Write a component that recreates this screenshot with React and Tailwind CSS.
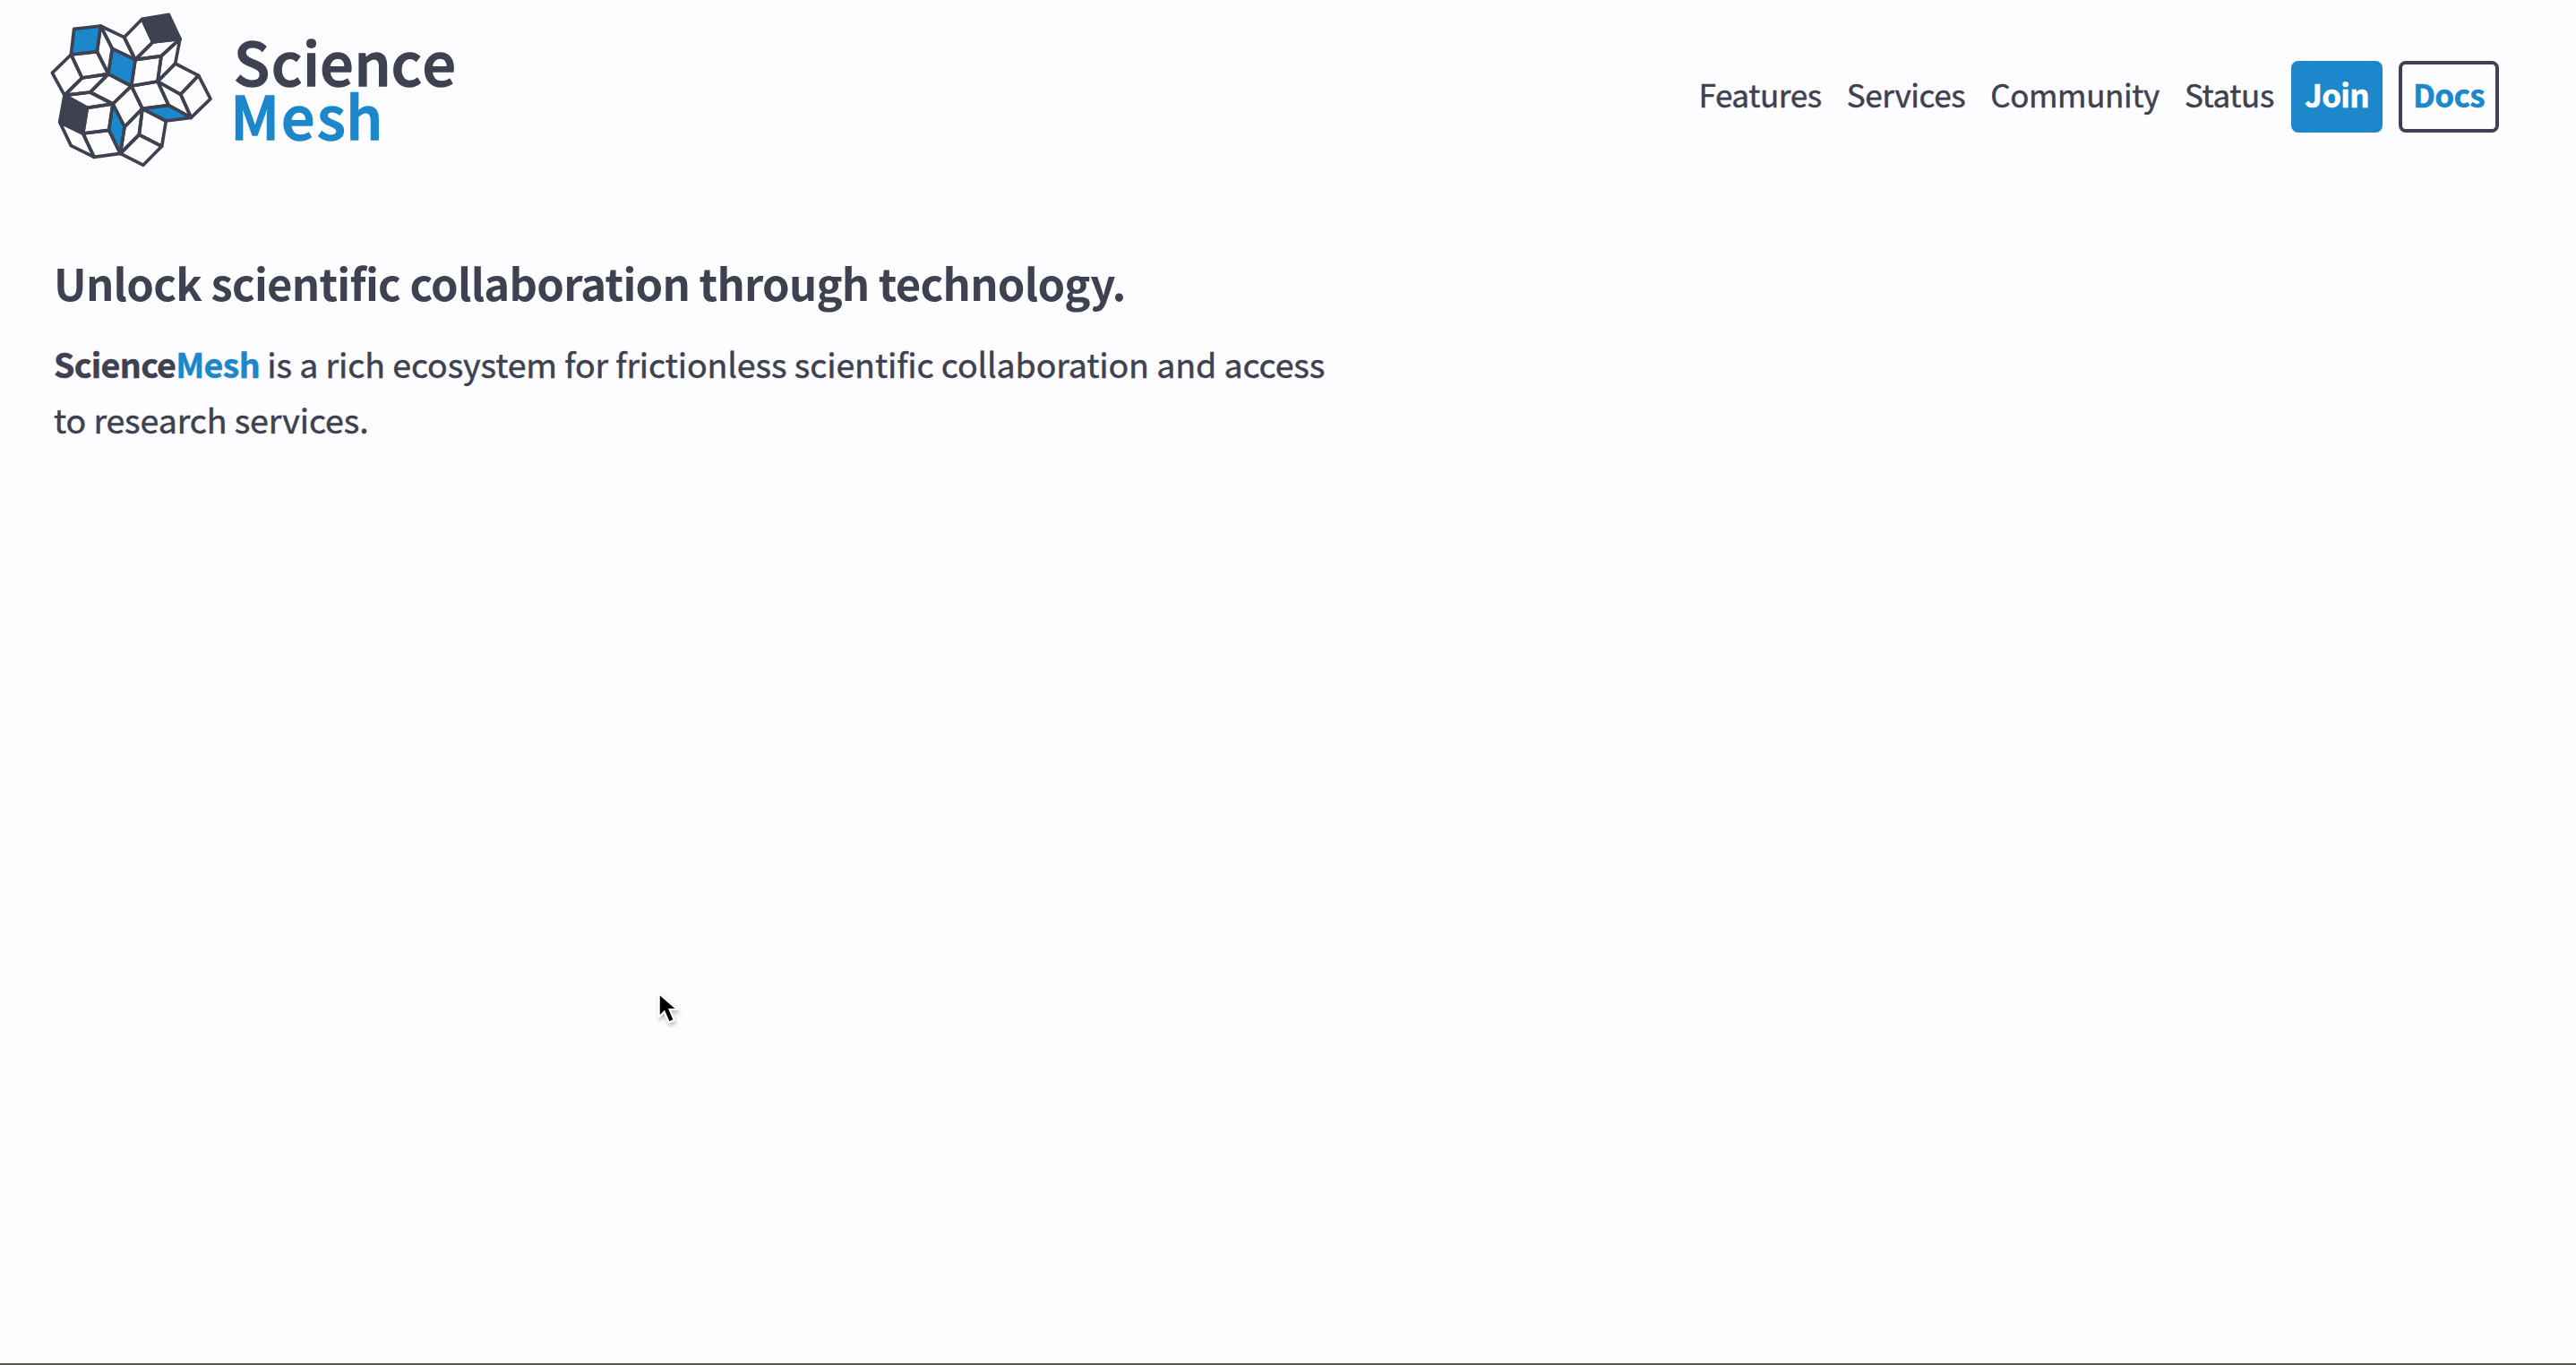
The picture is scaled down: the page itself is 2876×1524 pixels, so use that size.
const BLUE = "#1c87cb";
const DARK = "#3e4150";

const whiteTiles = [
  "296,124 356,63 392,140 333,199",
  "392,140 483,129 420,187 333,199",
  "420,187 483,129 467,212 408,272",
  "333,199 420,187 408,272 320,287",
  "217,86 296,124 333,199 256,162",
  "217,86 256,162 243,247 205,172",
  "205,172 243,247 155,260 118,182",
  "118,182 155,260 96,318 55,243",
  "155,260 243,247 182,308 96,318",
  "243,247 320,287 258,347 182,308",
  "96,318 182,308 258,347 172,360",
  "172,360 258,347 245,435 158,446",
  "80,408 158,446 195,525 118,487",
  "158,446 245,435 283,513 195,525",
  "320,287 357,363 297,424 258,347",
  "357,363 346,450 283,513 297,424",
  "346,450 422,489 360,552 283,513",
  "357,363 436,404 422,489 346,450",
  "320,287 408,272 445,352 357,363",
  "408,272 485,315 520,393 445,352",
  "467,212 545,252 485,315 408,272",
  "545,252 585,330 520,393 485,315",
];
const blueTiles = [
  "128,96 217,86 205,172 118,182",
  "256,162 333,199 320,287 243,247",
  "258,347 297,424 283,513 245,435",
  "357,363 445,352 520,393 436,404",
];
const darkTiles = [
  "356,63 445,48 483,129 392,140",
  "96,318 172,360 158,446 80,408",
];

function Logo() {
  return (
    <a className="flex h-[200px] shrink-0">
      <svg className="h-[200px] w-[210px]" viewBox="0 -1 630 600" stroke={DARK} strokeWidth="11" strokeLinejoin="round">
        {whiteTiles.map((p) => <polygon key={p} points={p} fill="none" />)}
        {blueTiles.map((p) => <polygon key={p} points={p} fill={BLUE} />)}
        {darkTiles.map((p) => <polygon key={p} points={p} fill={DARK} />)}
      </svg>
      <svg className="h-[200px] w-[300px]" viewBox="250 0 300 200" fontFamily="'Noto Sans CJK SC', sans-serif" fontSize="66" fontWeight="500" strokeWidth="1.6">
        <text x="261 303 338 357.3 395.5 436.7 471.5" y="95.9" fill={DARK} stroke={DARK}>Science</text>
        <text x="257.3 314 354 386.3" y="155.9" fill={BLUE} stroke={BLUE}>Mesh</text>
      </svg>
    </a>
  );
}

export default function App() {
  return (
    <div className="relative flex h-[1524px] w-full flex-col overflow-hidden border-b-2 border-[#55584f] bg-[#fdfdff] font-['Noto_Sans_CJK_SC','Noto_Sans',sans-serif] text-[#3e4150]">
      <header className="flex h-[216px] items-start justify-between pr-[86px] pl-[40px]">
        <Logo />
        <nav className="mt-[68px] flex h-20 items-center text-[35px] leading-[74px] tracking-[-0.37px] [-webkit-text-stroke:0.5px]">
          <a className="mr-7 h-20 whitespace-nowrap">Features</a>
          <a className="mr-7 h-20 whitespace-nowrap">Services</a>
          <a className="mr-7 h-20 whitespace-nowrap">Community</a>
          <a className="mr-[19px] h-20 whitespace-nowrap">Status</a>
          <a className="mr-[18px] flex h-20 w-[102px] justify-center rounded-[8px] bg-[#1c87cb] font-bold tracking-[-0.7px] text-white">Join</a>
          <a className="flex h-20 w-[112px] justify-center rounded-[8px] border-4 border-[#3e4150] font-bold leading-[66px] tracking-[-0.7px] text-[#1c87cb]">Docs</a>
        </nav>
      </header>
      <main className="pt-[61px] pl-[60px]">
        <h1 className="text-[49px] leading-[76px] font-bold tracking-[-0.76px] whitespace-nowrap">Unlock scientific collaboration through technology.</h1>
        <p className="mt-[22px] text-[37.5px] leading-[62px] tracking-[-0.1px] whitespace-nowrap [-webkit-text-stroke:0.5px]">
          <strong className="font-bold tracking-[-0.65px]">Science<span className="text-[#1c87cb]">Mesh</span></strong> is a rich ecosystem for frictionless scientific collaboration and access
          <br />
          to research services.
        </p>
      </main>
      <svg className="absolute top-[1107px] left-[731px] h-[40px] w-[29px] drop-shadow-[1px_3px_2px_rgba(0,0,0,0.25)]" viewBox="0 0 34 46">
        <path d="M5.5 2v31l7-7 6 14 7-3-6-14h10z" fill="#000" stroke="#fff" strokeWidth="2.5" />
      </svg>
    </div>
  );
}
